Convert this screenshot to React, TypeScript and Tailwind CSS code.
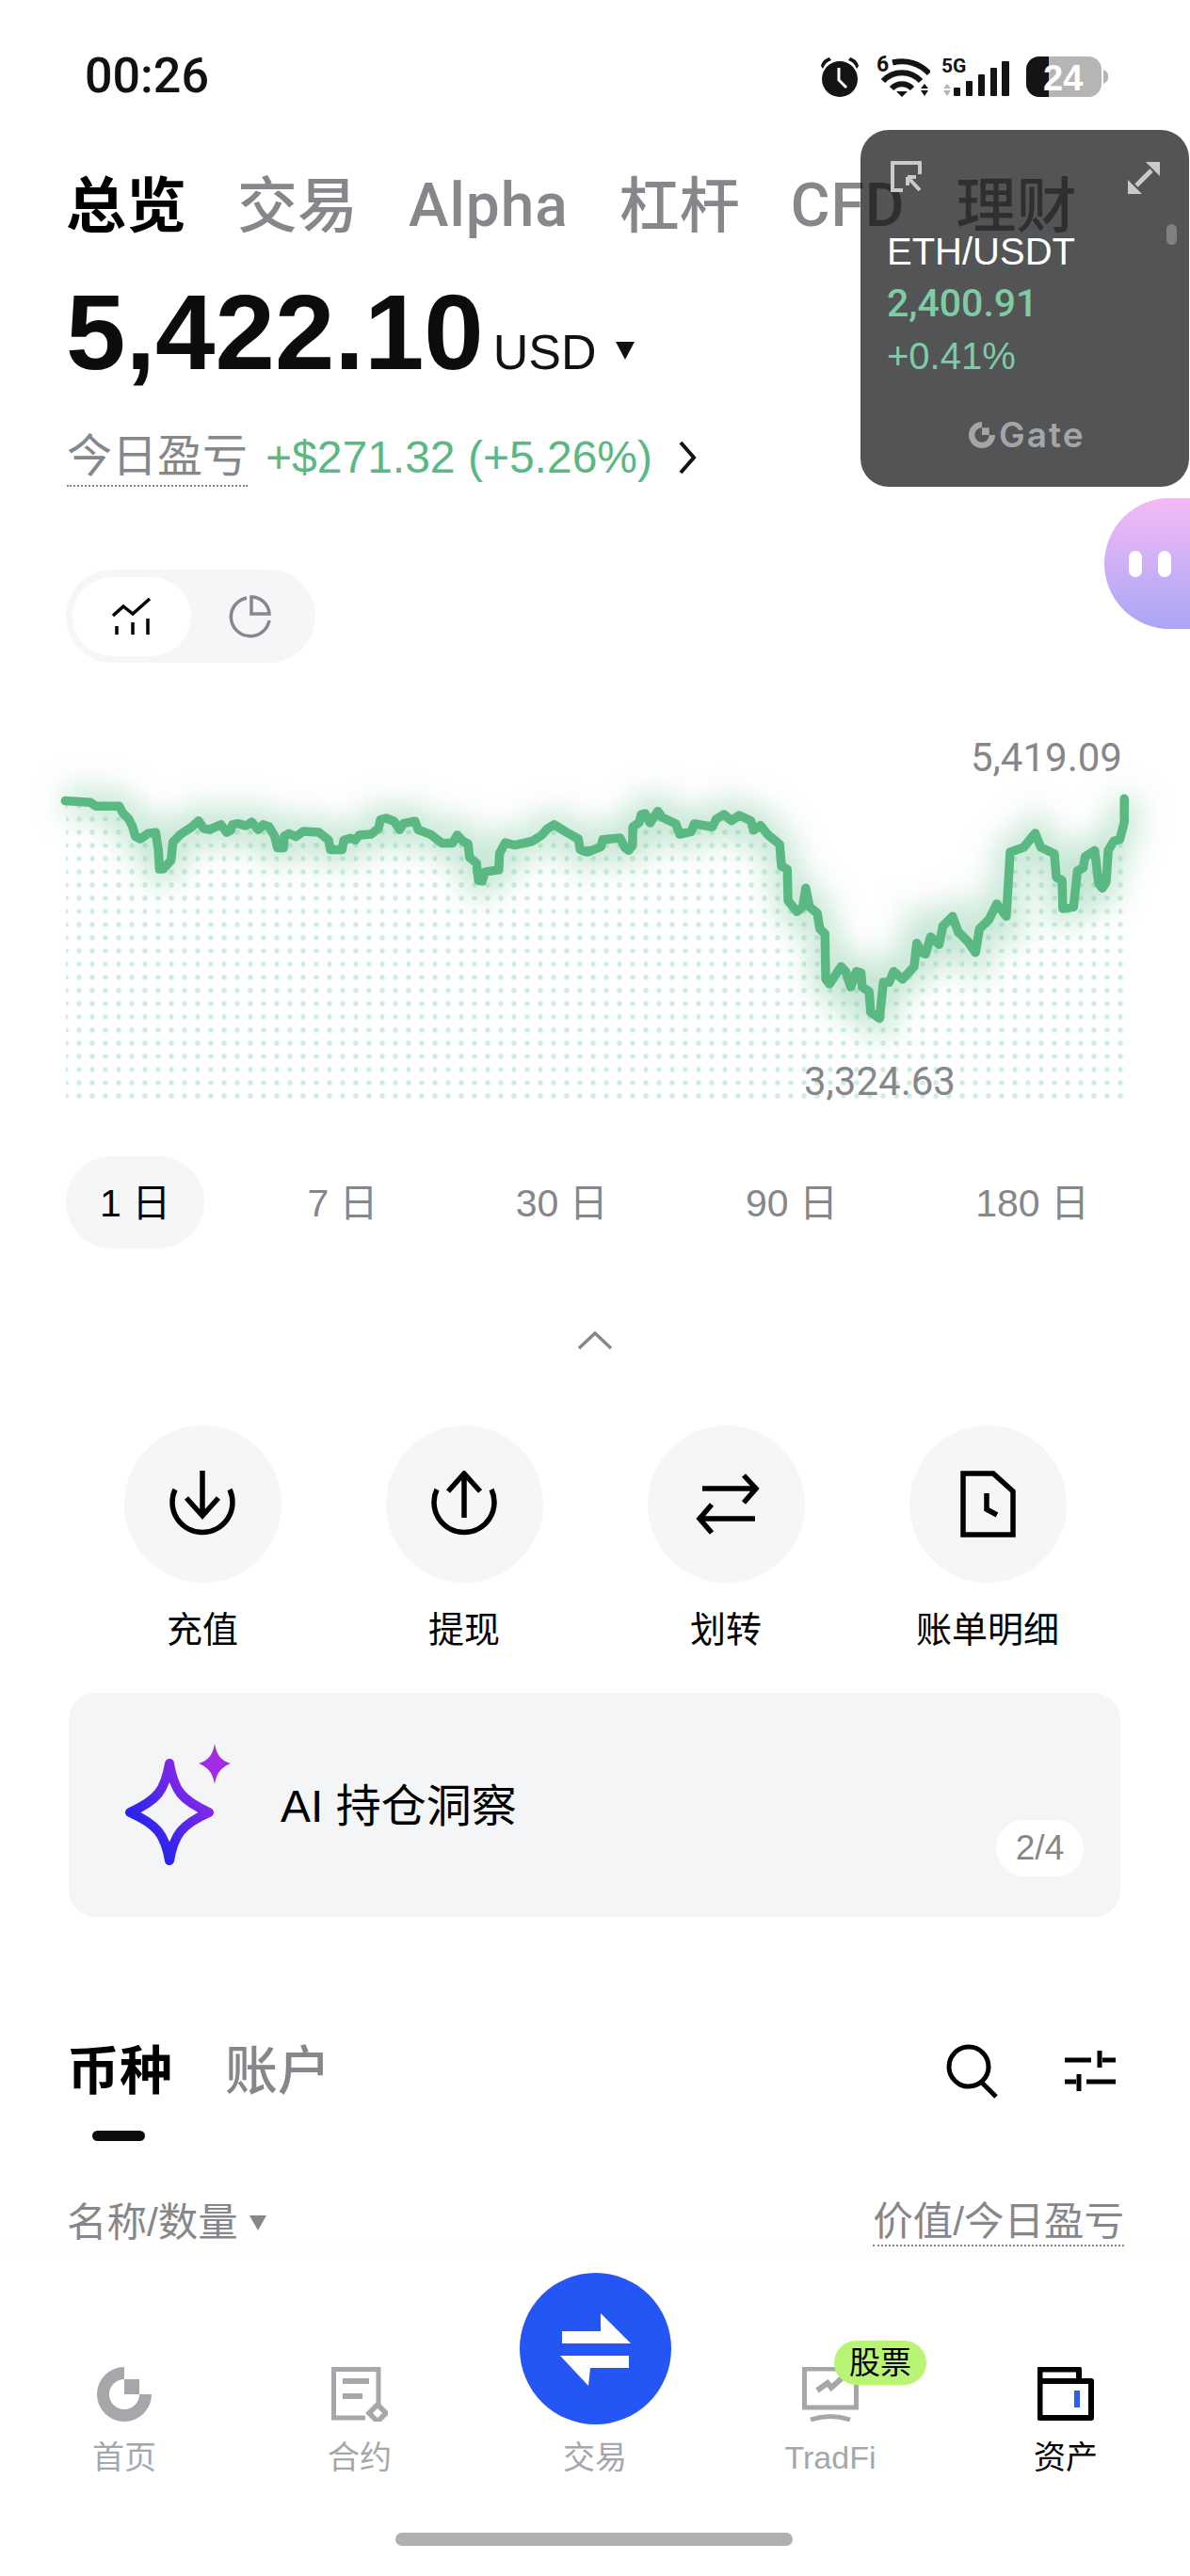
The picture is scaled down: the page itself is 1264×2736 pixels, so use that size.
import React from 'react';

const GREEN = '#5ab883';

// traced from the chart, [x, y] in page pixels
const leftTrace: number[][] = [[170,663],[235,667],[250,677],[310,677],[320,695],[335,710],[345,730],[352,755],[365,762],[385,748],[405,745],[412,790],[415,840],[425,840],[445,818],[450,770],[470,750],[500,730],[517,715],[530,735],[545,738],[575,725],[590,745],[600,740],[605,725],[620,722],[640,728],[655,718],[672,738],[685,725],[700,730],[715,755],[722,785],[738,785],[740,755],[752,748],[770,756],[790,742],[830,745],[855,765],[860,790],[890,790],[895,765],[912,760],[925,765],[935,752],[965,750],[985,735],[990,712],[1005,708],[1025,716],[1040,738],[1050,722],[1080,716],[1088,738],[1120,750],[1150,773],[1178,773],[1190,752],[1205,768],[1218,775],[1222,810],[1240,825],[1245,870],[1255,872],[1262,848],[1298,842],[1300,800],[1315,772],[1340,778],[1385,768],[1410,752],[1425,735],[1442,725],[1475,745],[1505,762],[1510,790],[1522,795],[1529,792]];
const rightTrace: number[][] = [[0,435],[35,418],[40,395],[85,390],[97,420],[107,430],[117,415],[118,355],[135,340],[140,315],[150,312],[163,342],[183,305],[195,325],[230,345],[240,378],[270,370],[278,345],[325,355],[335,330],[355,315],[375,335],[395,318],[425,335],[432,365],[450,350],[470,380],[500,410],[505,480],[520,490],[522,590],[545,625],[560,610],[568,550],[578,610],[598,630],[605,680],[618,695],[620,840],[630,855],[660,800],[672,815],[685,865],[700,815],[712,820],[715,865],[733,880],[737,945],[760,965],[770,850],[785,850],[797,815],[820,840],[850,800],[857,725],[870,755],[880,760],[893,705],[915,730],[925,670],[950,640],[965,690],[990,720],[1010,755],[1020,680],[1045,650],[1065,600],[1090,640],[1100,435],[1135,420],[1165,375],[1180,420],[1215,440],[1220,515],[1235,525],[1237,615],[1265,610],[1275,495],[1290,485],[1295,450],[1320,430],[1330,535],[1340,550],[1350,530],[1355,430],[1370,400],[1385,395],[1397,340],[1397,265]];

const linePts = [
    ...leftTrace.map(([x, y]) => [x / 2.45, 580 + y / 2.45]),
    ...rightTrace.map(([x, y]) => [624 + x / 2.45, 760 + y / 3]),
].map(([x, y]) => `${x.toFixed(1)},${y.toFixed(1)}`);

const linePath = linePts.join(' ');
const areaPath = `${linePath} 1196,1172 70,1172`;

const StatusIcons: React.FC = () => (
    <div className="flex items-center gap-[12px]">
        <svg width="46" height="46" viewBox="0 0 46 46" className="mr-[3px]">
            <circle cx="23" cy="26" r="19" fill="#141414" />
            <path d="M3 12 C4 7 8 4 12 3 L14 6 C10 7 7 10 5 15Z M43 12 C42 7 38 4 34 3 L32 6 C36 7 39 10 41 15Z" fill="#141414" />
            <path d="M22 14 V27 L30 35" stroke="#fff" strokeWidth="3" fill="none" />
        </svg>
        <svg width="58" height="52" viewBox="0 -6 58 52" className="-mt-[6px]">
            <text x="1" y="18" fontSize="23" fontWeight="700" fill="#141414" fontFamily="Roboto, sans-serif">6</text>
            <g fill="none" stroke="#141414" strokeWidth="6">
                <path d="M18 8.5 A39 39 0 0 1 57 20" />
                <path d="M8 28 A27 27 0 0 1 48 28" />
                <path d="M17 36 A15 15 0 0 1 39 36" />
            </g>
            <path d="M22 39 H34 L28 45Z M48 36 L52 31 L56 36Z M48 38 H56 L52 44Z" fill="#141414" />
        </svg>
        <svg width="72" height="52" viewBox="0 -6 72 52" className="-mt-[6px]">
            <text x="0" y="19" fontSize="21" fontWeight="700" fill="#141414" fontFamily="Roboto, sans-serif">5G</text>
            <path d="M2 36 L6 31 L10 36Z M2 38 H10 L6 44Z" fill="#b5b5b5" />
            <rect x="13" y="35" width="7" height="9" rx="1" fill="#141414" />
            <rect x="26" y="28" width="7" height="16" rx="1" fill="#141414" />
            <rect x="39" y="21" width="7" height="23" rx="1" fill="#141414" />
            <rect x="52" y="14" width="7" height="30" rx="1" fill="#141414" />
            <rect x="64" y="7" width="8" height="37" rx="1" fill="#141414" />
        </svg>
        <svg width="87" height="46" viewBox="0 0 87 46" className="ml-[6px]">
            <rect x="0" y="2" width="80" height="43" rx="14" fill="#b5b5b5" />
            <path d="M24 2 H14 A14 14 0 0 0 0 16 V31 A14 14 0 0 0 14 45 H24Z" fill="#141414" />
            <path d="M82 16 A8 8 0 0 1 82 31Z" fill="#b5b5b5" />
            <text x="18" y="38" fontSize="38" fontWeight="700" fill="#fff" fontFamily="'Liberation Sans', sans-serif">24</text>
        </svg>
    </div>
);

const FloatingTicker: React.FC = () => (
    <div className="absolute left-[914px] top-[138px] w-[349px] h-[379px] rounded-[30px] bg-[rgba(6,7,9,0.69)]">
        <svg width="36" height="36" viewBox="0 0 36 36" className="absolute left-[32px] top-[33px]">
            <path d="M13 31 H2 V2 H31 V14" fill="none" stroke="#c9caca" strokeWidth="4" />
            <path d="M18 17 V26 M18 17 H27 M19 18 L31 31" fill="none" stroke="#c9caca" strokeWidth="4" />
        </svg>
        <svg width="36" height="36" viewBox="0 0 36 36" className="absolute left-[283px] top-[33px]">
            <path d="M20 1 H35 V16Z M1 20 L16 35 H1Z" fill="#c9caca" />
            <path d="M10 26 L26 10" stroke="#c9caca" strokeWidth="5" />
        </svg>
        <div className="absolute left-[325px] top-[100px] w-[11px] h-[22px] rounded-full bg-[#7f8082]" />
        <div className="pl-[28px] pt-[113px] flex flex-col">
            <span className="text-[40px] leading-[32px] text-white">ETH/USDT</span>
            <span className="text-[41px] leading-[48px] mt-[15px] font-medium text-[#7fcba5] [font-family:Roboto,sans-serif]">2,400.91</span>
            <span className="text-[40px] leading-[48px] mt-[8px] text-[#7fcba5]">+0.41%</span>
        </div>
        <div className="absolute left-[115px] top-[310px] flex items-center gap-[4px]">
            <svg width="28" height="28" viewBox="0 0 58 58">
                <path d="M29 0 A29 29 0 1 0 58 29 H45 A16 16 0 1 1 29 13 Z" fill="#a4a5a7" />
                <rect x="29" y="13" width="16" height="16" fill="#a4a5a7" />
            </svg>
            <span className="text-[37px] leading-[28px] tracking-[2px] font-semibold text-[#a4a5a7] [font-family:Inter,sans-serif]">Gate</span>
        </div>
    </div>
);

const actions = [
    {
        label: '充值',
        icon: (
            <>
                <path d="M6 20 A32 32 0 1 0 64 20" />
                <path d="M35 0 V46 M18 29 L35 48 L52 29" />
            </>
        ),
    },
    {
        label: '提现',
        icon: (
            <>
                <path d="M6 20 A32 32 0 1 0 64 20" />
                <path d="M35 50 V4 M18 22 L35 3 L52 22" />
            </>
        ),
    },
    {
        label: '划转',
        icon: <path d="M10 19 H66 M54 5 L67 19 L54 34 M66 51 H8 M20 36 L7 51 L20 66" />,
    },
    {
        label: '账单明细',
        icon: <path d="M9 3 H41 L62 22 V68 H9 Z M34 24 V41 L45 47" />,
    },
];

const ranges = ['1 日', '7 日', '30 日', '90 日', '180 日'];

const App: React.FC = () => {
    return (
        <div className="relative w-[1264px] h-[2736px] overflow-hidden bg-white flex flex-col [font-family:'Liberation_Sans','Noto_Sans_CJK_SC',sans-serif]">
            {/* status bar */}
            <div className="flex items-center justify-between pl-[90px] pr-[87px] mt-[58px] h-[46px]">
                <span className="text-[52px] leading-[46px] font-medium text-[#111] [font-family:Roboto,sans-serif]">00:26</span>
                <StatusIcons />
            </div>

            {/* top tabs */}
            <div className="flex items-center gap-[54px] pl-[70px] mt-[79px] h-[72px] text-[64px] leading-[72px] font-medium text-[#85878a]">
                <span className="font-bold text-black">总览</span>
                <span>交易</span>
                <span className="[font-family:Roboto,sans-serif] tracking-[1px]">Alpha</span>
                <span>杠杆</span>
                <span className="[font-family:Roboto,sans-serif] tracking-[1px]">CFD</span>
                <span>理财</span>
            </div>

            {/* balance */}
            <div className="flex items-baseline pl-[70px] mt-[42px] h-[112px]">
                <span className="text-[114px] leading-[112px] font-bold text-[#0b0c0c]">5,422.10</span>
                <span className="text-[52px] leading-[112px] ml-[10px] text-[#111]">USD</span>
                <svg width="20" height="20" viewBox="0 0 20 20" className="ml-[20px] self-center mt-[38px]">
                    <path d="M0 1 H20 L10 20Z" fill="#111" />
                </svg>
            </div>

            {/* today pnl */}
            <div className="flex items-center pl-[71px] mt-[46px] h-[62px]">
                <span className="text-[48px] leading-[60px] text-[#85878a] border-b-2 border-dotted border-[#85878a]">今日盈亏</span>
                <span className="text-[48px] leading-[60px] ml-[19px] text-[#5ab883]">+$271.32 (+5.26%)</span>
                <svg width="22" height="36" viewBox="0 0 22 36" className="ml-[26px]">
                    <path d="M4 2 L18 18 L4 34" fill="none" stroke="#111" strokeWidth="4" />
                </svg>
            </div>

            {/* chart / pie toggle */}
            <div className="mt-[88px] ml-[70px] w-[265px] h-[99px] rounded-full bg-[#f5f6f7] flex items-center pl-[7px]">
                <div className="w-[126px] h-[84px] rounded-full bg-white flex items-center justify-center">
                    <svg width="42" height="40" viewBox="0 0 42 40">
                        <path d="M1 19 L12 9 L22 17 L40 1 M5 39 V30 M22 39 V26 M38 39 V22" fill="none" stroke="#000" strokeWidth="3.5" />
                    </svg>
                </div>
                <svg width="46" height="46" viewBox="0 0 46 46" className="ml-[39px]">
                    <path d="M20 3 A20.5 20.5 0 1 0 44 27" fill="none" stroke="#85878a" strokeWidth="3.5" />
                    <path d="M25 2 V20 H44 A19 19 0 0 0 25 2Z" fill="none" stroke="#85878a" strokeWidth="3.5" />
                </svg>
            </div>

            {/* chart */}
            <div className="relative h-[420px] mt-[76px]">
                <svg width="1264" height="420" viewBox="0 780 1264 420">
                    <defs>
                        <pattern id="dots" x="70" y="864" width="14" height="14" patternUnits="userSpaceOnUse">
                            <circle cx="0" cy="6" r="2.7" fill="#cfeee0" />
                            <circle cx="14" cy="6" r="2.7" fill="#cfeee0" />
                        </pattern>
                        <clipPath id="under">
                            <polygon points={areaPath} />
                        </clipPath>
                        <filter id="glow" x="-5%" y="-40%" width="110%" height="180%">
                            <feGaussianBlur stdDeviation="16" />
                        </filter>
                    </defs>
                    <rect x="70" y="850" width="1124" height="318" fill="url(#dots)" clipPath="url(#under)" />
                    <polyline points={linePath} fill="none" stroke={GREEN} strokeOpacity="0.36" strokeWidth="30" filter="url(#glow)" />
                    <polyline points={linePath} fill="none" stroke={GREEN} strokeWidth="9.5" strokeLinecap="round" strokeLinejoin="round" />
                </svg>
                <span className="absolute left-[1031px] top-[0px] text-[42px] leading-[50px] text-[#85878a] [font-family:Roboto,sans-serif]">5,419.09</span>
                <span className="absolute left-[854px] top-[344px] text-[42px] leading-[50px] text-[#85878a] [font-family:Roboto,sans-serif]">3,324.63</span>
            </div>

            {/* range tabs */}
            <div className="flex items-center justify-between pl-[70px] pr-[70px] mt-[28px] h-[98px] text-[41px] text-[#85878a]">
                {ranges.map((r, i) => (
                    <span
                        key={r}
                        className={i === 0 ? 'h-[98px] pt-[3px] px-[36px] rounded-full bg-[#f5f6f7] text-black flex items-center' : 'pt-[3px] px-[37px]'}
                    >
                        {r}
                    </span>
                ))}
            </div>

            {/* collapse chevron */}
            <div className="flex justify-center mt-[88px]">
                <svg width="38" height="20" viewBox="0 0 38 20">
                    <path d="M2 18 L19 2 L36 18" fill="none" stroke="#85878a" strokeWidth="3.5" />
                </svg>
            </div>

            {/* actions */}
            <div className="grid grid-cols-4 w-[1112px] ml-[76px] mt-[80px]">
                {actions.map(a => (
                    <div key={a.label} className="flex flex-col items-center">
                        <div className="w-[167px] h-[167px] rounded-full bg-[#f5f6f7] flex items-center justify-center">
                            <svg width="71" height="71" viewBox="0 0 71 71" fill="none" stroke="#000" strokeWidth="5.5">
                                {a.icon}
                            </svg>
                        </div>
                        <span className="mt-[26px] text-[38px] leading-[48px] text-black">{a.label}</span>
                    </div>
                ))}
            </div>

            {/* AI card */}
            <div className="relative mt-[43px] ml-[73px] w-[1117px] h-[238px] rounded-[28px] bg-[#f4f5f7] flex items-center pl-[60px]">
                <svg width="112" height="130" viewBox="0 0 112 130">
                    <defs>
                        <linearGradient id="spark" x1="0" y1="1" x2="1" y2="0">
                            <stop offset="0.25" stopColor="#2a25ee" />
                            <stop offset="1" stopColor="#a828e6" />
                        </linearGradient>
                    </defs>
                    <path d="M47 21 C52 50 60 60 89 73 C60 86 52 96 47 124 C42 96 34 86 5 73 C34 60 42 50 47 21Z" fill="none" stroke="url(#spark)" strokeWidth="10" strokeLinejoin="round" />
                    <path d="M95 0 C97 12 102 18 112 21 C102 25 97 31 95 43 C93 31 88 25 78 21 C88 18 93 12 95 0Z" fill="#a52ae6" />
                </svg>
                <span className="ml-[53px] mt-[3px] text-[48px] leading-[60px] text-black">AI 持仓洞察</span>
                <span className="absolute right-[39px] top-[135px] w-[93px] h-[60px] rounded-full bg-white flex items-center justify-center text-[37px] text-[#85878a]">2/4</span>
            </div>

            {/* section tabs */}
            <div className="flex items-center pl-[71px] pr-[79px] mt-[134px] h-[60px]">
                <span className="text-[56px] leading-[60px] font-bold text-black">币种</span>
                <span className="ml-[56px] text-[56px] leading-[60px] font-medium text-[#85878a]">账户</span>
                <svg width="58" height="58" viewBox="0 0 58 58" className="ml-auto">
                    <circle cx="24" cy="24" r="21" fill="none" stroke="#000" strokeWidth="5" />
                    <path d="M38 41 L53 56" stroke="#000" strokeWidth="5" />
                </svg>
                <svg width="54" height="44" viewBox="0 0 54 44" className="ml-[68px]">
                    <path d="M0 10 H28 M40 10 H54 M37 0 V18 M0 33 H12 M23 33 H54 M15 25 V43" fill="none" stroke="#000" strokeWidth="5" />
                </svg>
            </div>

            {/* active indicator */}
            <div className="w-[56px] h-[11px] rounded-full bg-[#0b0c0c] ml-[98px] mt-[33px]" />

            {/* list header */}
            <div className="flex items-center pl-[71px] pr-[70px] mt-[62px] h-[50px] text-[42.5px] leading-[48px] text-[#85878a]">
                <span>名称/数量</span>
                <svg width="18" height="16" viewBox="0 0 18 16" className="ml-[12px]">
                    <path d="M0 0 H18 L9 16Z" fill="#85878a" />
                </svg>
                <span className="ml-auto border-b-2 border-dotted border-[#85878a]">价值/今日盈亏</span>
            </div>

            {/* bottom nav */}
            <div className="absolute left-0 right-0 bottom-0 h-[342px] bg-white shadow-[0_-6px_24px_rgba(0,0,0,0.015)]">
                <div className="grid grid-cols-5 w-[1250px] ml-[7px] pt-[20px]">
                    <div className="flex flex-col items-center pt-[100px] text-[#a5a7ab]">
                        <svg width="58" height="58" viewBox="0 0 58 58">
                            <path d="M29 0 A29 29 0 1 0 58 29 H45 A16 16 0 1 1 29 13 Z" fill="#a5a7ab" />
                            <rect x="29" y="13" width="16" height="16" fill="#a5a7ab" />
                        </svg>
                        <span className="mt-[17px] text-[34px] leading-[42px]">首页</span>
                    </div>
                    <div className="flex flex-col items-center pt-[100px] text-[#a5a7ab]">
                        <svg width="60" height="58" viewBox="0 0 60 58">
                            <path d="M36 54 H2.5 V2.5 H50 V42" fill="none" stroke="#a5a7ab" strokeWidth="5" />
                            <path d="M12 15 H40 M12 31 H33" fill="none" stroke="#a5a7ab" strokeWidth="6" />
                            <path d="M49 40 L58 49 L49 58 L40 49Z" fill="none" stroke="#a5a7ab" strokeWidth="5.5" />
                        </svg>
                        <span className="mt-[17px] text-[34px] leading-[42px]">合约</span>
                    </div>
                    <div className="flex flex-col items-center text-[#a5a7ab]">
                        <div className="w-[161px] h-[161px] rounded-full bg-[#2456f6] flex items-center justify-center">
                            <svg width="76" height="78" viewBox="0 0 76 78">
                                <path d="M3 20 H44 V1 L76 33 H3Z M74 46 H1 L31 78 L33 59 H74Z" fill="#fff" />
                            </svg>
                        </div>
                        <span className="mt-[14px] text-[34px] leading-[42px]">交易</span>
                    </div>
                    <div className="relative flex flex-col items-center pt-[100px] text-[#a5a7ab]">
                        <svg width="60" height="58" viewBox="0 0 60 58">
                            <path d="M2.5 2 H57.5 V43 H2.5Z" fill="none" stroke="#a5a7ab" strokeWidth="5" />
                            <path d="M16 25 L27 17 L31 22 L42 12" fill="none" stroke="#a5a7ab" strokeWidth="6" />
                            <path d="M9 56 Q30 49 51 56" fill="none" stroke="#a5a7ab" strokeWidth="5" />
                        </svg>
                        <span className="mt-[17px] text-[34px] leading-[42px]">TradFi</span>
                        <span className="absolute left-[129px] top-[72px] w-[98px] h-[47px] rounded-full bg-[#b9f474] flex items-center justify-center text-[33px] text-black">股票</span>
                    </div>
                    <div className="flex flex-col items-center pt-[100px] text-black">
                        <svg width="60" height="58" viewBox="0 0 60 58">
                            <path d="M2.5 2.5 H44 V15 H57 V54 H2.5Z M2.5 15 H44" fill="none" stroke="#000" strokeWidth="6" strokeLinejoin="round" />
                            <rect x="39" y="25" width="6" height="18" fill="#2c5df0" />
                        </svg>
                        <span className="mt-[17px] text-[34px] leading-[42px]">资产</span>
                    </div>
                </div>
                <div className="absolute left-[420px] bottom-[32px] w-[422px] h-[14px] rounded-full bg-[#b0b0b0]" />
            </div>

            <FloatingTicker />

            {/* assistant bubble */}
            <div className="absolute left-[1173px] top-[529px] w-[91px] h-[139px] rounded-l-[70px] bg-gradient-to-b from-[#f5b9f5] to-[#a8a6f5] flex items-center gap-[17px] pl-[26px]">
                <div className="w-[14px] h-[28px] rounded-full bg-white" />
                <div className="w-[14px] h-[28px] rounded-full bg-white" />
            </div>
        </div>
    );
};

export default App;
